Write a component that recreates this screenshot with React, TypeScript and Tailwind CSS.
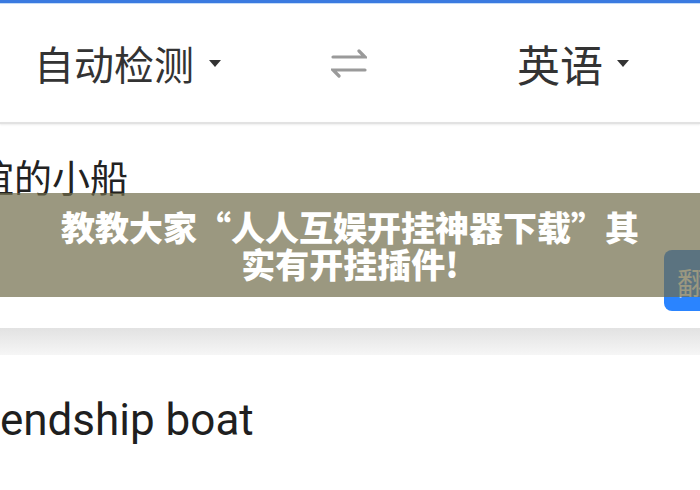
const cjk = { fontFamily: '"Noto Sans CJK SC", "Noto Sans", sans-serif' };

function Caret() {
  return (
    <svg width="12" height="7" viewBox="0 0 12 7" className="shrink-0">
      <path d="M0 0h12L6 7z" fill="#333" />
    </svg>
  );
}

function SwapIcon() {
  return (
    <svg width="36" height="36" viewBox="0 0 36 36" fill="none" stroke="#9a9a9a" strokeWidth="3.2" strokeLinecap="round">
      <path d="M2 12h32L28 6" />
      <path d="M34 25H2l6 6" />
    </svg>
  );
}

export default function App() {
  return (
    <div className="relative h-[490px] w-[700px] overflow-hidden bg-white" style={cjk}>
      <div className="h-[3px] bg-[#3a7ae0]" />
      <div className="h-[1px] bg-[#c4dcf8]" />

      <header className="flex h-[118px] items-center pl-[34px] text-[40px] leading-none text-[#333]">
        <div className="flex items-center gap-[15px]">
          <span>自动检测</span>
          <Caret />
        </div>
        <div className="ml-[110px]">
          <SwapIcon />
        </div>
        <div className="ml-[150px] flex items-center gap-[14px]">
          <span className="text-[43px]">英语</span>
          <Caret />
        </div>
      </header>
      <div className="h-[2px] bg-[#e2e2e2] shadow-[0_1px_2px_rgba(0,0,0,0.08)]" />

      <section className="flex h-[204px] flex-col pt-[33px]">
        <div className="ml-[-24px] text-[38px] leading-none text-[#222]">谊的小船</div>
        <div className="mt-auto mb-[17px] flex justify-end">
          <button className="mr-[-44px] flex h-[61px] w-[80px] items-center rounded-lg bg-[#2a84ff] pl-[13px] text-[30px] leading-none text-white">
            翻译
          </button>
        </div>
      </section>

      <div className="h-[27px] bg-gradient-to-b from-[#e2e2e2] to-[#f6f6f6]" />

      <section className="pt-[43px]">
        <div
          className="ml-[-41px] whitespace-nowrap text-[44px] leading-none text-[#1f1f1f]"
          style={{ fontFamily: 'Roboto, "Liberation Sans", sans-serif' }}
        >
          friendship boat
        </div>
      </section>

      <div className="absolute left-0 top-[193px] flex h-[104px] w-full items-center justify-center bg-[rgba(112,108,74,0.7)] px-[52px] text-center text-[34px] font-black leading-[37px] text-white">
        教教大家“人人互娱开挂神器下载”其实有开挂插件!
      </div>
    </div>
  );
}
